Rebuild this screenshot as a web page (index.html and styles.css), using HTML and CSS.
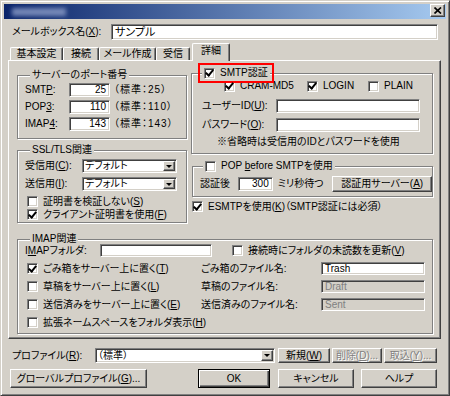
FILE: index.html
```html
<!DOCTYPE html>
<html lang="ja">
<head>
    <meta charset="UTF-8">
    <title>メールボックスの設定</title>
    <link rel="stylesheet" href="styles.css">
</head>
<body>
<div class="window">
    <div class="titlebar">
        <div class="title-blur"></div>
        <div class="close-btn">
            <svg width="8" height="7" viewBox="0 0 8 7"><path d="M0.5 0.5 L7 6.5 M7 0.5 L0.5 6.5" stroke="#000" stroke-width="1.7"/></svg>
        </div>
    </div>

    <div class="name-row">
        <span class="name-label">メールボックス名(<u>X</u>):</span>
        <div class="field name-field">サンプル</div>
    </div>

    <div class="tabs">
        <div class="tab t1">基本設定</div>
        <div class="tab t2">接続</div>
        <div class="tab t3">メール作成</div>
        <div class="tab t4">受信</div>
        <div class="tab active">詳細</div>
    </div>

    <div class="panel">
        <div class="columns">
            <div class="col">
                <!-- ports -->
                <div class="group ports">
                    <div class="group-title">サーバーのポート番号</div>
                    <div class="port-row">
                        <span class="port-label">SMT<u>P</u>:</span>
                        <div class="field num">25</div>
                        <span class="port-note">（標準：25）</span>
                    </div>
                    <div class="port-row">
                        <span class="port-label">POP<u>3</u>:</span>
                        <div class="field num">110</div>
                        <span class="port-note">（標準：110）</span>
                    </div>
                    <div class="port-row">
                        <span class="port-label">IMAP<u>4</u>:</span>
                        <div class="field num">143</div>
                        <span class="port-note">（標準：143）</span>
                    </div>
                </div>

                <!-- ssl -->
                <div class="group ssl">
                    <div class="group-title">SSL/TLS関連</div>
                    <div class="ssl-row first">
                        <span class="ssl-label">受信用(<u>C</u>):</span>
                        <div class="combo ssl-combo">
                            <div class="field combo-text">デフォルト</div>
                            <div class="drop"><i></i></div>
                        </div>
                    </div>
                    <div class="ssl-row">
                        <span class="ssl-label">送信用(<u>I</u>):</span>
                        <div class="combo ssl-combo">
                            <div class="field combo-text">デフォルト</div>
                            <div class="drop"><i></i></div>
                        </div>
                    </div>
                    <div class="check-row first"><span class="cb"></span><span>証明書を検証しない(<u>S</u>)</span></div>
                    <div class="check-row"><span class="cb on"></span><span>クライアント証明書を使用(<u>F</u>)</span></div>
                </div>
            </div>

            <div class="col">
                <!-- smtp auth -->
                <div class="group auth">
                    <div class="group-title check-title highlight"><span class="cb on"></span><span>SMTP認証</span></div>
                    <div class="mech-row">
                        <span class="mech m1"><span class="cb on"></span><span>CRAM-MD5</span></span>
                        <span class="mech m2"><span class="cb on"></span><span>LOGIN</span></span>
                        <span class="mech"><span class="cb"></span><span>PLAIN</span></span>
                    </div>
                    <div class="cred-row user">
                        <span class="cred-label">ユーザーID(<u>U</u>):</span>
                        <div class="field cred-field"></div>
                    </div>
                    <div class="cred-row pass">
                        <span class="cred-label">パスワード(<u>O</u>):</span>
                        <div class="field cred-field"></div>
                    </div>
                    <div class="auth-note">※省略時は受信用のIDとパスワードを使用</div>
                </div>

                <!-- pop before smtp -->
                <div class="group pbs">
                    <div class="group-title check-title"><span class="cb"></span><span>POP <u>b</u>efore SMTPを使用</span></div>
                    <div class="pbs-row">
                        <span class="pbs-label">認証後</span>
                        <div class="field num wait">300</div>
                        <span class="pbs-unit">ミリ秒待つ</span>
                        <div class="btn auth-server"><span>認証用サーバー(<u>A</u>)</span></div>
                    </div>
                </div>

                <div class="check-row esmtp"><span class="cb on"></span><span>ESMTPを使用(<u>K</u>)（SMTP認証には必須）</span></div>
            </div>
        </div>

        <!-- imap -->
        <div class="group imap">
            <div class="group-title">IMAP関連</div>
            <div class="imap-top">
                <span class="imap-label">I<u>M</u>APフォルダ:</span>
                <div class="field imap-folder"></div>
                <span class="check-row refresh"><span class="cb"></span><span>接続時にフォルダの未読数を更新(<u>V</u>)</span></span>
            </div>
            <div class="imap-grid">
                <div class="check-row"><span class="cb on"></span><span>ごみ箱をサーバー上に置く(<u>T</u>)</span></div>
                <span>ごみ箱のファイル名:</span>
                <div class="field box-name">Trash</div>

                <div class="check-row"><span class="cb"></span><span>草稿をサーバー上に置く(<u>L</u>)</span></div>
                <span>草稿のファイル名:</span>
                <div class="field box-name disabled">Draft</div>

                <div class="check-row"><span class="cb"></span><span>送信済みをサーバー上に置く(<u>E</u>)</span></div>
                <span>送信済みのファイル名:</span>
                <div class="field box-name disabled">Sent</div>
            </div>
            <div class="check-row ns"><span class="cb"></span><span>拡張ネームスペースをフォルダ表示(<u>H</u>)</span></div>
        </div>
    </div>

    <div class="profile-row">
        <span class="profile-label">プロファイル(<u>R</u>):</span>
        <div class="combo profile-combo">
            <div class="field combo-text">（標準）</div>
            <div class="drop"><i></i></div>
        </div>
        <div class="btn small new"><span>新規(<u>W</u>)</span></div>
        <div class="btn small del disabled"><span>削除(<u>D</u>)...</span></div>
        <div class="btn small imp disabled"><span>取込(<u>Y</u>)...</span></div>
    </div>

    <div class="button-row">
        <div class="btn global"><span>グローバルプロファイル(<u>G</u>)...</span></div>
        <div class="btn default ok">OK</div>
        <div class="btn cancel">キャンセル</div>
        <div class="btn help">ヘルプ</div>
    </div>
</div>
</body>
</html>
```

FILE: styles.css
```css
/* Global */
* {
    box-sizing: border-box;
}

body {
    margin: 0;
    font-family: "Liberation Sans", "Noto Sans CJK JP", sans-serif;
    font-size: 10px;
    line-height: 12px;
    color: #000;
    background: #d4d0c8;
    font-feature-settings: "palt";
}

u {
    text-underline-offset: 1px;
}

/* Window frame */
.window {
    width: 450px;
    height: 396px;
    padding: 3px;
    background: #d4d0c8;
    border: 1px solid;
    border-color: #d4d0c8 #404040 #404040 #d4d0c8;
    box-shadow: inset 1px 1px #fff, inset -1px -1px #808080;
    display: flex;
    flex-direction: column;
}

.titlebar {
    height: 15px;
    flex: none;
    display: flex;
    align-items: center;
    justify-content: space-between;
    padding: 0 1px 0 8px;
    background: linear-gradient(to right, #0a246a, #a6caf0);
}

.title-blur {
    width: 54px;
    height: 8px;
    background: #8c9dc8;
    filter: blur(2px);
    opacity: 0.8;
}

.close-btn {
    width: 15px;
    height: 13px;
    margin-top: -2px;
    display: flex;
    align-items: center;
    justify-content: center;
    background: #d4d0c8;
    border: 1px solid;
    border-color: #fff #404040 #404040 #fff;
    box-shadow: inset -1px -1px #808080;
}

/* Common controls */
.field {
    background: #fff;
    border: 1px solid;
    border-color: #808080 #fff #fff #808080;
    box-shadow: inset 1px 1px #404040, inset -1px -1px #d4d0c8;
    padding: 0 3px;
    display: flex;
    align-items: center;
    white-space: nowrap;
    overflow: hidden;
}

.field.num {
    justify-content: flex-end;
}

.field.disabled {
    background: #d4d0c8;
    color: #808080;
}

.btn {
    background: #d4d0c8;
    border: 1px solid;
    border-color: #fff #404040 #404040 #fff;
    box-shadow: inset -1px -1px #808080;
    display: flex;
    align-items: center;
    justify-content: center;
    white-space: nowrap;
}

.btn.disabled {
    color: #808080;
    text-shadow: 1px 1px #fff;
}

.btn.default {
    border-color: #000;
    box-shadow: inset 1px 1px #fff, inset -1px -1px #404040, inset -2px -2px #808080;
}

.cb {
    width: 11px;
    height: 11px;
    flex: none;
    background: #fff;
    border: 1px solid;
    border-color: #808080 #fff #fff #808080;
    box-shadow: inset 1px 1px #404040, inset -1px -1px #d4d0c8;
    display: flex;
    align-items: center;
    justify-content: center;
}

.cb.on::after {
    content: "";
    width: 3px;
    height: 6px;
    margin-top: -2px;
    border: solid #000;
    border-width: 0 2px 2px 0;
    transform: rotate(40deg);
}

.check-row {
    display: flex;
    align-items: center;
    gap: 5px;
    height: 13px;
    white-space: nowrap;
}

.combo {
    display: flex;
    background: #fff;
    border: 1px solid;
    border-color: #808080 #fff #fff #808080;
    box-shadow: inset 1px 1px #404040, inset -1px -1px #d4d0c8;
    padding: 2px;
}

.combo .combo-text {
    flex: 1;
    border: none;
    box-shadow: none;
    padding: 0 1px;
}

.drop {
    width: 12px;
    flex: none;
    background: #d4d0c8;
    border: 1px solid;
    border-color: #fff #404040 #404040 #fff;
    box-shadow: inset -1px -1px #808080;
    display: flex;
    align-items: center;
    justify-content: center;
}

.drop i {
    border-left: 3px solid transparent;
    border-right: 3px solid transparent;
    border-top: 3px solid #000;
}

/* Name row */
.name-row {
    display: flex;
    align-items: center;
    height: 16px;
    margin-top: 5px;
    padding-left: 8px;
}

.name-label {
    width: 99px;
}

.name-field {
    width: 327px;
    height: 16px;
    font-size: 11px;
}

/* Tabs */
.tabs {
    display: flex;
    align-items: flex-end;
    height: 20px;
    padding-left: 6px;
    position: relative;
    z-index: 1;
}

.tab {
    height: 13px;
    display: flex;
    align-items: center;
    justify-content: center;
    border-top: 1px solid #fff;
    border-left: 1px solid #fff;
    border-right: 1px solid #404040;
    box-shadow: inset -1px 0 #808080;
    border-radius: 2px 2px 0 0;
}

.t1 { width: 53px; }
.t2 { width: 36px; }
.t3 { width: 57px; }
.t4 { width: 34px; }

.tab.active {
    width: 38px;
    height: 18px;
    margin-left: 2px;
    margin-bottom: -1px;
    background: #d4d0c8;
    padding-bottom: 3px;
}

/* Tab panel */
.panel {
    height: 279px;
    margin: 0 5px 0 4px;
    padding: 6px 6px 0 8px;
    border: 1px solid;
    border-color: #fff #404040 #404040 #fff;
    box-shadow: inset -1px -1px #808080;
}

.columns {
    display: grid;
    grid-template-columns: 170px 242px;
    column-gap: 4px;
    align-items: start;
}

/* Group boxes */
.group {
    border: 1px solid #808080;
    box-shadow: inset 1px 1px #fff, 1px 1px #fff;
}

.group-title {
    width: fit-content;
    height: 12px;
    margin: -7px 0 0 5px;
    padding: 0 2px;
    background: #d4d0c8;
    white-space: nowrap;
}

.check-title {
    display: flex;
    align-items: center;
    gap: 5px;
    margin-left: 10px;
}

.highlight {
    outline: 2px solid #f00;
    outline-offset: 2px;
}

/* Ports */
.ports {
    margin-top: 8px;
    padding: 0 0 7px 7px;
}

.port-row {
    display: flex;
    align-items: center;
    height: 14px;
    margin-top: 3px;
}

.port-row:nth-child(2) {
    margin-top: 2px;
}

.port-label {
    width: 44px;
}

.port-row .field {
    width: 41px;
    height: 14px;
}

.port-note {
    margin-left: 4px;
    letter-spacing: 1px;
}

/* SSL */
.ssl {
    margin-top: 11px;
    padding: 0 0 1px 7px;
}

.ssl-row {
    display: flex;
    align-items: center;
    margin-top: 4px;
}

.ssl-row.first {
    margin-top: 3px;
}

.ssl-label {
    width: 57px;
}

.ssl-combo {
    width: 95px;
    height: 14px;
    padding: 1px;
}

.ssl .check-row {
    margin-left: 2px;
}

.ssl .check-row.first {
    margin-top: 4px;
}

/* SMTP auth */
.auth {
    margin-top: 6px;
    padding-bottom: 5px;
}

.mech-row {
    display: flex;
    height: 12px;
    margin-top: 1px;
    padding-left: 32px;
}

.mech {
    display: flex;
    align-items: center;
    gap: 5px;
}

.m1 { width: 83px; }
.m2 { width: 61px; }

.cred-row {
    display: flex;
    align-items: center;
    height: 14px;
    padding-left: 10px;
}

.cred-row.user { margin-top: 7px; }
.cred-row.pass { margin-top: 5px; }

.cred-label {
    width: 74px;
}

.cred-field {
    width: 144px;
    height: 14px;
}

.auth-note {
    margin-top: 4px;
    padding-left: 25px;
    white-space: nowrap;
}

/* POP before SMTP */
.pbs {
    margin-top: 12px;
    margin-left: 1px;
    width: 241px;
    padding-bottom: 4px;
}

.pbs-row {
    display: flex;
    align-items: center;
    height: 16px;
    margin-top: 4px;
    padding-left: 7px;
}

.pbs-label {
    width: 38px;
}

.wait {
    width: 35px;
    height: 14px;
}

.pbs-unit {
    width: 55px;
    margin-left: 5px;
}

.auth-server {
    width: 100px;
    height: 16px;
}

.esmtp {
    margin-top: 3px;
    margin-left: 1px;
}

/* IMAP */
.imap {
    width: 416px;
    margin-top: 16px;
    padding: 0 0 4px 7px;
}

.imap-top {
    display: flex;
    align-items: center;
    height: 13px;
    margin-top: -1px;
}

.imap-label {
    width: 75px;
}

.imap-folder {
    width: 112px;
    height: 13px;
}

.refresh {
    margin-left: 20px;
}

.imap-grid {
    display: grid;
    grid-template-columns: 176px 120px 104px;
    grid-auto-rows: 13px;
    row-gap: 5px;
    align-items: center;
    margin-top: 5px;
}

.imap-grid .check-row,
.imap .ns {
    margin-left: 2px;
}

.box-name {
    height: 13px;
}

.imap .ns {
    margin-top: 5px;
}

/* Profile + buttons */
.profile-row {
    display: flex;
    align-items: center;
    height: 15px;
    margin-top: 9px;
    padding-left: 8px;
}

.profile-label {
    width: 83px;
}

.profile-combo {
    width: 180px;
    height: 15px;
    padding: 1px;
}

.btn.small {
    height: 15px;
}

.new { width: 52px; margin-left: 3px; }
.del { width: 50px; margin-left: 2px; }
.imp { width: 53px; margin-left: 2px; }

.button-row {
    display: flex;
    height: 19px;
    margin-top: 6px;
    padding-left: 6px;
}

.global { width: 137px; }
.ok { width: 72px; margin-left: 51px; }
.cancel { width: 76px; margin-left: 8px; }
.help { width: 76px; margin-left: 7px; }
```
